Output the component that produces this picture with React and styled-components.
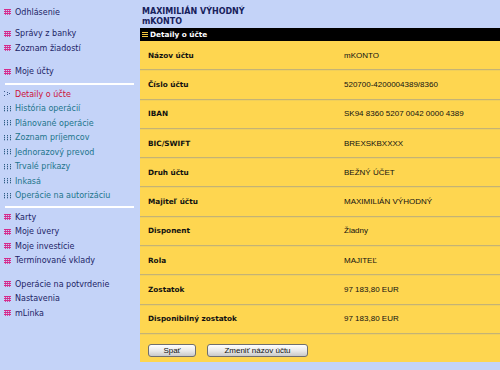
import styled, { createGlobalStyle } from "styled-components";

const GlobalStyle = createGlobalStyle`
  html, body {
    margin: 0;
    padding: 0;
    background: #c4d3f8;
  }
  body {
    font-family: "DejaVu Sans", Verdana, sans-serif;
  }
`;

const Page = styled.div`
  display: grid;
  grid-template-columns: 140px 1fr;
  width: 500px;
  height: 370px;
  overflow: hidden;
`;

const Sidebar = styled.nav`
  display: flex;
  flex-direction: column;
  padding: 5px 0 0 4px;
`;

const Group = styled.div`
  display: flex;
  flex-direction: column;
  margin-top: ${(p) => p.gap || 0}px;
`;

const Divider = styled.div`
  height: 2px;
  background: #ffffff;
  margin: ${(p) => p.top}px 6px ${(p) => p.bottom}px 1px;
`;

const Item = styled.a`
  display: flex;
  align-items: center;
  gap: 4px;
  height: 14.5px;
  font-size: 8px;
  text-decoration: none;
  white-space: nowrap;
  color: ${(p) =>
    p.active ? "#cc1037" : p.sub ? "#22758c" : "#1c2466"};
`;

const Main = styled.main`
  display: flex;
  flex-direction: column;
  padding-top: 7px;
`;

const Owner = styled.div`
  padding-left: 2px;
  font-size: 8px;
  font-weight: bold;
  line-height: 9.5px;
  color: #17215c;
  margin-bottom: 2px;
`;

const Bar = styled.div`
  display: flex;
  align-items: center;
  gap: 2px;
  height: 13px;
  padding-left: 2px;
  background: #000;
  color: #fff;
  font-size: 7.3px;
  font-weight: bold;
`;

const Panel = styled.section`
  background: #fed650;
  width: 360px;
  height: 321px;
  display: flex;
  flex-direction: column;
`;

const Row = styled.div`
  display: grid;
  grid-template-columns: 196px 1fr;
  align-items: center;
  height: 29.3px;
  box-sizing: border-box;
  padding-left: 8px;
  border-bottom: 1px solid #c4b375;
  box-shadow: 0 1px 0 #f0cf5a;
  color: #111;
`;

const Label = styled.span`
  font-size: 7.3px;
  font-weight: bold;
`;

const Value = styled.span`
  font-family: "Liberation Sans", Arial, sans-serif;
  font-size: 8px;
`;

const Actions = styled.div`
  display: flex;
  gap: 11px;
  padding: 10px 0 0 8px;
`;

const Button = styled.button`
  width: ${(p) => p.w}px;
  height: 13px;
  padding: 0;
  border: 1px solid #6f6f6f;
  border-radius: 3px;
  background: linear-gradient(#ffffff, #e8e8e8 55%, #c9c9c9);
  font-family: "Liberation Sans", Arial, sans-serif;
  font-size: 8px;
  color: #111;
  line-height: 11px;
`;

const MainIcon = () => (
  <svg width="7" height="6" viewBox="0 0 7 6">
    {[0, 2, 4].map((y) => (
      <rect key={y} x="0" y={y} width="7" height="1" fill="#d52a8c" />
    ))}
    {[1, 3, 5].map((x) => (
      <rect key={x} x={x} y="0" width="1" height="6" fill="#d52a8c" opacity="0.8" />
    ))}
  </svg>
);

const SubIcon = () => (
  <svg width="7" height="6" viewBox="0 0 7 6">
    {[0, 2, 4].map((y) =>
      [0, 3, 6].map((x) => (
        <rect key={x + "-" + y} x={x} y={y} width="1" height="1.3" fill="#2f5f86" />
      ))
    )}
  </svg>
);

const ActiveIcon = () => (
  <svg width="7" height="6" viewBox="0 0 7 6">
    <rect x="0" y="0" width="1" height="1" fill="#3a5a8a" />
    <rect x="0" y="4" width="1" height="1" fill="#3a5a8a" />
    <rect x="3" y="1" width="1" height="1" fill="#3a5a8a" />
    <rect x="3" y="3" width="1" height="1" fill="#3a5a8a" />
    <rect x="5" y="2" width="1" height="1" fill="#3a5a8a" />
  </svg>
);

const BarIcon = () => (
  <svg width="6" height="6" viewBox="0 0 6 6">
    {[0, 2, 4].map((y) => (
      <rect key={y} x="0" y={y} width="6" height="1" fill="#f3c53c" />
    ))}
  </svg>
);

const groups = [
  { gap: 0, items: ["Odhlásenie"] },
  { gap: 7, items: ["Správy z banky", "Zoznam žiadostí"] },
  { gap: 9, items: ["Moje účty"] },
];

const subItems = [
  "Detaily o účte",
  "História operácií",
  "Plánované operácie",
  "Zoznam príjemcov",
  "Jednorazový prevod",
  "Trvalé príkazy",
  "Inkasá",
  "Operácie na autorizáciu",
];

const details = [
  ["Názov účtu", "mKONTO"],
  ["Číslo účtu", "520700-4200004389/8360"],
  ["IBAN", "SK94 8360 5207 0042 0000 4389"],
  ["BIC/SWIFT", "BREXSKBXXXX"],
  ["Druh účtu", "BEŽNÝ ÚČET"],
  ["Majiteľ účtu", "MAXIMILIÁN VÝHODNÝ"],
  ["Disponent", "Žiadny"],
  ["Rola", "MAJITEĽ"],
  ["Zostatok", "97 183,80 EUR"],
  ["Disponibilný zostatok", "97 183,80 EUR"],
];

function App() {
  return (
    <>
      <GlobalStyle />
      <Page>
        <Sidebar>
          {groups.map((g, i) => (
            <Group key={i} gap={g.gap}>
              {g.items.map((label) => (
                <Item key={label} href="#">
                  <MainIcon />
                  {label}
                </Item>
              ))}
            </Group>
          ))}
          <Divider top={4} bottom={2} />
          <Group>
            {subItems.map((label, i) => (
              <Item key={label} href="#" sub active={i === 0}>
                {i === 0 ? <ActiveIcon /> : <SubIcon />}
                {label}
              </Item>
            ))}
          </Group>
          <Divider top={3} bottom={2} />
          <Group>
            {["Karty", "Moje úvery", "Moje investície", "Termínované vklady"].map((label) => (
              <Item key={label} href="#">
                <MainIcon />
                {label}
              </Item>
            ))}
          </Group>
          <Group gap={9}>
            {["Operácie na potvrdenie", "Nastavenia", "mLinka"].map((label) => (
              <Item key={label} href="#">
                <MainIcon />
                {label}
              </Item>
            ))}
          </Group>
        </Sidebar>

        <Main>
          <Owner>
            MAXIMILIÁN VÝHODNÝ
            <br />
            mKONTO
          </Owner>
          <Bar>
            <BarIcon />
            Detaily o účte
          </Bar>
          <Panel>
            {details.map(([label, value]) => (
              <Row key={label}>
                <Label>{label}</Label>
                <Value>{value}</Value>
              </Row>
            ))}
            <Actions>
              <Button w={48}>Spať</Button>
              <Button w={101}>Zmeniť názov účtu</Button>
            </Actions>
          </Panel>
        </Main>
      </Page>
    </>
  );
}

export default App;
